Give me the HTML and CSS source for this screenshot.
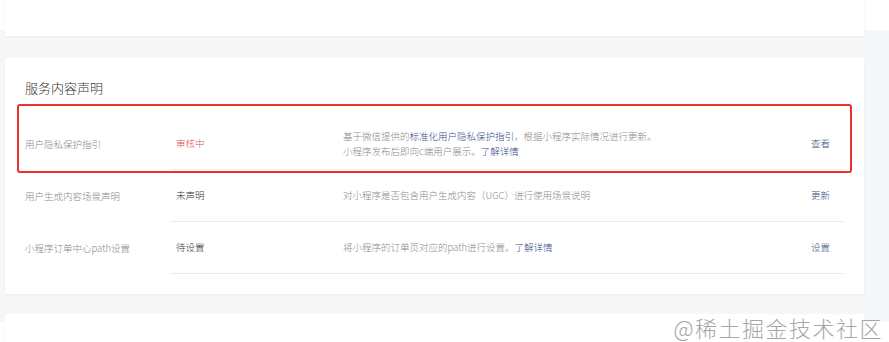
FILE: index.html
```html
<!DOCTYPE html>
<html lang="zh-CN">
<head>
    <meta charset="UTF-8">
    <meta name="viewport" content="width=device-width, initial-scale=1.0">
    <title>服务内容声明</title>
    <link rel="stylesheet" href="styles.css">
</head>
<body>
    <div class="card card-top"></div>

    <div class="card card-main">
        <h2 class="card-title">服务内容声明</h2>
        <div class="decl-list">
            <div class="decl-row">
                <div class="decl-name">用户隐私保护指引</div>
                <div class="decl-body">
                    <div class="decl-status status-review">审核中</div>
                    <div class="decl-desc">
                        基于微信提供的<a class="link" href="#">标准化用户隐私保护指引</a>，根据小程序实际情况进行更新。<br>
                        小程序发布后即向c端用户展示。<a class="link" href="#">了解详情</a>
                    </div>
                    <a class="decl-action" href="#">查看</a>
                </div>
            </div>
            <div class="decl-row">
                <div class="decl-name">用户生成内容场景声明</div>
                <div class="decl-body">
                    <div class="decl-status">未声明</div>
                    <div class="decl-desc">对小程序是否包含用户生成内容（UGC）进行使用场景说明</div>
                    <a class="decl-action" href="#">更新</a>
                </div>
            </div>
            <div class="decl-row">
                <div class="decl-name">小程序订单中心path设置</div>
                <div class="decl-body">
                    <div class="decl-status">待设置</div>
                    <div class="decl-desc">将小程序的订单页对应的path进行设置。<a class="link" href="#">了解详情</a></div>
                    <a class="decl-action" href="#">设置</a>
                </div>
            </div>
        </div>
        <div class="highlight"></div> <!-- red annotation box -->
    </div>

    <div class="card card-bottom"></div>

    <div class="watermark">@稀土掘金技术社区</div>
</body>
</html>
```

FILE: styles.css
```css
/* Service declaration page */
body {
    font-family: "Noto Sans CJK SC", "Noto Sans", sans-serif;
    font-weight: 300;
    margin: 0;
    height: 342px;
    overflow: hidden;
    position: relative;
    background: linear-gradient(to bottom, #fff 30px, #f6f7f9 30px, #f6f7f9 322px, #fff 322px);
}
.card {
    background: #fff;
    margin: 0 25px 0 5px;
    box-shadow: 0 1px 2px rgba(0, 0, 0, 0.06);
}
.card-top {
    height: 36px;
}
.card-main {
    position: relative;
    margin-top: 22px;
    height: 236px;
    padding: 0 19px 0 20px;
    box-sizing: border-box;
}
.card-bottom {
    margin-top: 20px;
    height: 40px;
}
.card-title {
    margin: 0;
    padding-top: 21px;
    height: 39px;
    font-size: 13px;
    font-weight: 300;
    line-height: 18px;
    color: #333;
}
.decl-row {
    display: grid;
    grid-template-columns: 145px 1fr;
    font-size: 9.5px;
    line-height: 15px;
}
.decl-name {
    color: #8a8a8a;
    display: flex;
    align-items: center;
    padding-top: 1px;
}
.decl-body {
    display: flex;
    align-items: center;
    height: 51px;
    border-bottom: 1px solid #ececec;
    padding-left: 6px;
}
.decl-status {
    width: 167px;
    color: #333;
}
.status-review {
    color: #d9534f;
}
.decl-desc {
    flex: 1;
    color: #8a8a8a;
}
.link {
    color: #3b4a8a;
    text-decoration: none;
}
.decl-action {
    width: 34px;
    color: #3e4c82;
    text-decoration: none;
}
.highlight {
    position: absolute;
    left: 12px;
    top: 46px;
    width: 835px;
    height: 69px;
    border: 2.5px solid #e8322b;
    border-radius: 3px;
    box-sizing: border-box;
}
.watermark {
    position: absolute;
    right: 6px;
    top: 313px;
    font-size: 22px;
    line-height: 28px;
    letter-spacing: 1.5px;
    color: #a6a6a6;
}
```
